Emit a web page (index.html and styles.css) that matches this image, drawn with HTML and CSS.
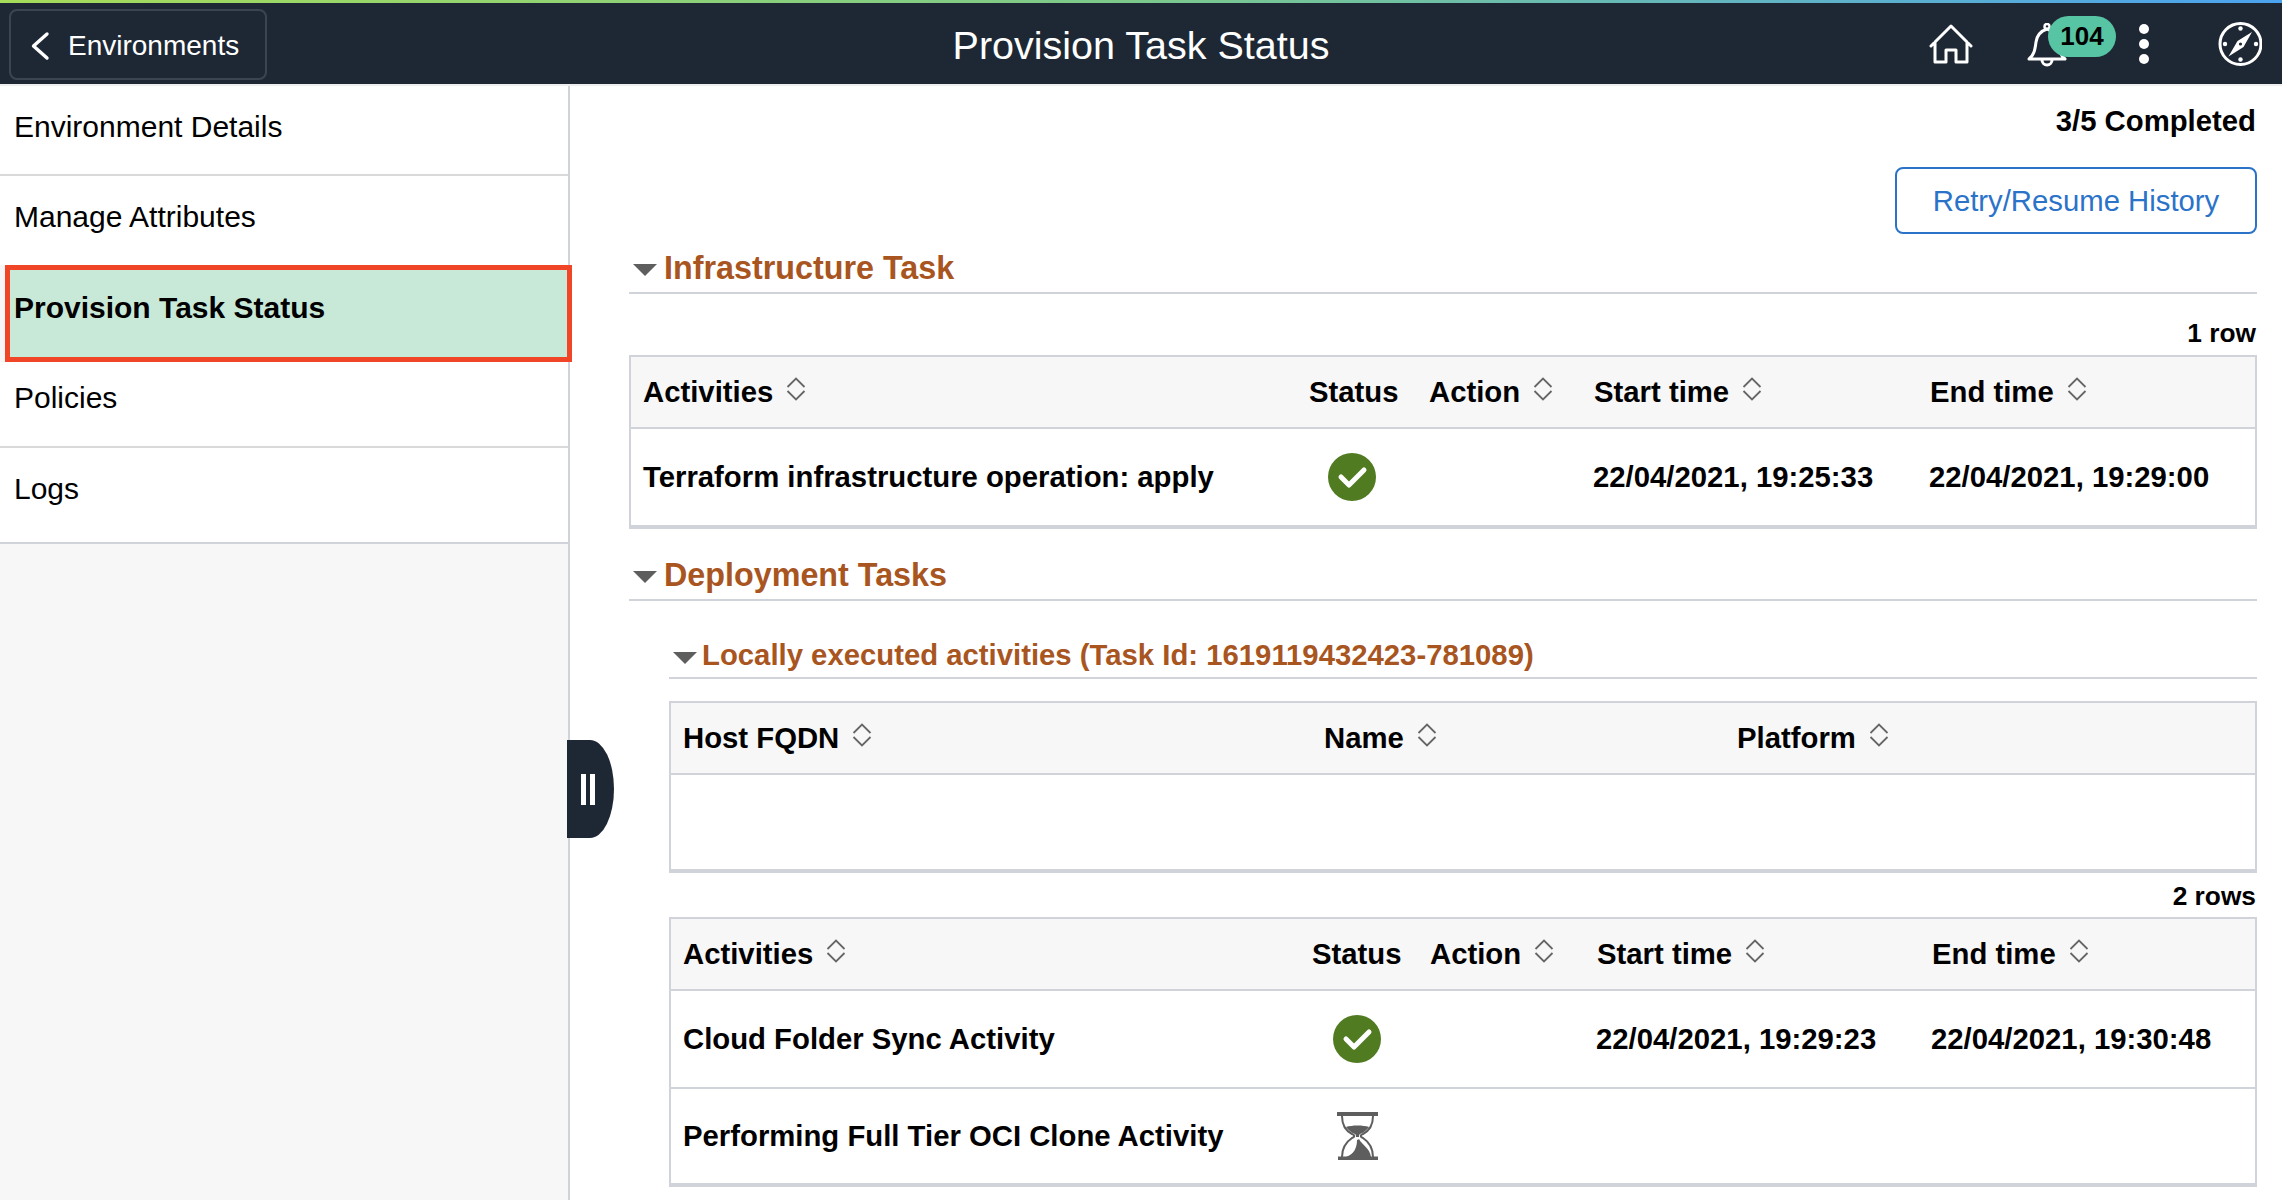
FILE: index.html
```html
<!DOCTYPE html>
<html lang="en">
<head>
<meta charset="utf-8">
<title>Provision Task Status</title>
<link rel="stylesheet" href="styles.css">
</head>
<body>
<div class="strip"></div>
<header class="topbar">
  <button class="back">
    <svg class="chev" viewBox="0 0 20 32" width="20" height="32"><path d="M17 4 3.500 16 17 28" fill="none" stroke="#fff" stroke-width="3.400" stroke-linecap="round" stroke-linejoin="round"/></svg>
    <span>Environments</span>
  </button>
  <h1 class="title">Provision Task Status</h1>
  <div class="tools">
    <svg class="home" viewBox="0 0 44 42" width="44" height="42"><path d="M2 22 22 2l20 20M6 18v20h11V26h10v12h11V18" fill="none" stroke="#fff" stroke-width="3" stroke-linecap="round" stroke-linejoin="round"/></svg>
    <div class="bell-wrap">
      <svg class="bell" viewBox="0 0 40 44" width="40" height="44"><path d="M2 36c5-4 6-9 7-17 1-7 5-11 11-13 6 2 10 6 11 13 1 8 2 13 7 17zM15 37a5 5 0 0 0 10 0" fill="none" stroke="#fff" stroke-width="3" stroke-linejoin="round"/><circle cx="20" cy="3.500" r="2.500" fill="none" stroke="#fff" stroke-width="2.500"/></svg>
      <span class="badge">104</span>
    </div>
    <div class="dots"><i></i><i></i><i></i></div>
    <svg class="compass" viewBox="0 0 44 44" width="44" height="44"><circle cx="22.500" cy="22" r="20.500" fill="none" stroke="#fff" stroke-width="3"/><path d="M34 10 25.500 25 19.500 19zM10.500 34.500 19.500 19l6 6z" fill="#fff"/><circle cx="22.500" cy="22" r="1.600" fill="#1e2835"/><circle cx="22.500" cy="6.500" r="2.200" fill="#fff"/><circle cx="22.500" cy="37.500" r="2.200" fill="#fff"/><circle cx="7" cy="22" r="2.200" fill="#fff"/><circle cx="38" cy="22" r="2.200" fill="#fff"/></svg>
  </div>
</header>
<div class="gap"></div>
<div class="shell">
  <nav class="side">
    <a class="nav one">Environment Details</a>
    <a class="nav two">Manage Attributes</a>
    <a class="nav sel">Provision Task Status</a>
    <a class="nav four">Policies</a>
    <a class="nav five">Logs</a>
  </nav>
  <div class="toggle"><i></i><i></i></div>
  <main class="main">
    <div class="done">3/5 Completed</div>
    <div class="btn-row"><button class="btn">Retry/Resume History</button></div>

    <div class="sec sec-a"><span class="tri"></span><h2>Infrastructure Task</h2></div>
    <div class="count c1">1 row</div>
    <div class="tbl">
      <div class="row head cols-a">
        <div>Activities <svg class="sort" viewBox="0 0 20 24" width="20" height="24"><path d="M1.500 10 10 1.500 18.500 10M1.500 14l8.500 8.500 8.500-8.500" fill="none" stroke="#666" stroke-width="1.800"/></svg></div>
        <div>Status</div>
        <div>Action <svg class="sort" viewBox="0 0 20 24" width="20" height="24"><path d="M1.500 10 10 1.500 18.500 10M1.500 14l8.500 8.500 8.500-8.500" fill="none" stroke="#666" stroke-width="1.800"/></svg></div>
        <div>Start time <svg class="sort" viewBox="0 0 20 24" width="20" height="24"><path d="M1.500 10 10 1.500 18.500 10M1.500 14l8.500 8.500 8.500-8.500" fill="none" stroke="#666" stroke-width="1.800"/></svg></div>
        <div>End time <svg class="sort" viewBox="0 0 20 24" width="20" height="24"><path d="M1.500 10 10 1.500 18.500 10M1.500 14l8.500 8.500 8.500-8.500" fill="none" stroke="#666" stroke-width="1.800"/></svg></div>
      </div>
      <div class="row body tall cols-a last">
        <div>Terraform infrastructure operation: apply</div>
        <div class="st st-a"><svg viewBox="0 0 48 48" width="48" height="48"><circle cx="24" cy="24" r="24" fill="#507b21"/><path d="M13 24l8 8 15-15" fill="none" stroke="#fff" stroke-width="5" stroke-linecap="round" stroke-linejoin="round"/></svg></div>
        <div></div>
        <div class="t-a">22/04/2021, 19:25:33</div>
        <div class="t-a">22/04/2021, 19:29:00</div>
      </div>
    </div>

    <div class="sec sec-b"><span class="tri"></span><h2>Deployment Tasks</h2></div>
    <div class="sub"><span class="tri small"></span><h3>Locally executed activities (Task Id: 1619119432423-781089)</h3></div>
    <div class="inner">
      <div class="tbl">
        <div class="row head cols-b">
          <div>Host FQDN <svg class="sort" viewBox="0 0 20 24" width="20" height="24"><path d="M1.500 10 10 1.500 18.500 10M1.500 14l8.500 8.500 8.500-8.500" fill="none" stroke="#666" stroke-width="1.800"/></svg></div>
          <div>Name <svg class="sort" viewBox="0 0 20 24" width="20" height="24"><path d="M1.500 10 10 1.500 18.500 10M1.500 14l8.500 8.500 8.500-8.500" fill="none" stroke="#666" stroke-width="1.800"/></svg></div>
          <div>Platform <svg class="sort" viewBox="0 0 20 24" width="20" height="24"><path d="M1.500 10 10 1.500 18.500 10M1.500 14l8.500 8.500 8.500-8.500" fill="none" stroke="#666" stroke-width="1.800"/></svg></div>
        </div>
        <div class="row body cols-b last"></div>
      </div>
      <div class="count c2">2 rows</div>
      <div class="tbl">
        <div class="row head cols-c">
          <div>Activities <svg class="sort" viewBox="0 0 20 24" width="20" height="24"><path d="M1.500 10 10 1.500 18.500 10M1.500 14l8.500 8.500 8.500-8.500" fill="none" stroke="#666" stroke-width="1.800"/></svg></div>
          <div>Status</div>
          <div>Action <svg class="sort" viewBox="0 0 20 24" width="20" height="24"><path d="M1.500 10 10 1.500 18.500 10M1.500 14l8.500 8.500 8.500-8.500" fill="none" stroke="#666" stroke-width="1.800"/></svg></div>
          <div>Start time <svg class="sort" viewBox="0 0 20 24" width="20" height="24"><path d="M1.500 10 10 1.500 18.500 10M1.500 14l8.500 8.500 8.500-8.500" fill="none" stroke="#666" stroke-width="1.800"/></svg></div>
          <div>End time <svg class="sort" viewBox="0 0 20 24" width="20" height="24"><path d="M1.500 10 10 1.500 18.500 10M1.500 14l8.500 8.500 8.500-8.500" fill="none" stroke="#666" stroke-width="1.800"/></svg></div>
        </div>
        <div class="row body cols-c">
          <div>Cloud Folder Sync Activity</div>
          <div class="st st-c"><svg viewBox="0 0 48 48" width="48" height="48"><circle cx="24" cy="24" r="24" fill="#507b21"/><path d="M13 24l8 8 15-15" fill="none" stroke="#fff" stroke-width="5" stroke-linecap="round" stroke-linejoin="round"/></svg></div>
          <div></div>
          <div class="t-c">22/04/2021, 19:29:23</div>
          <div class="t-c">22/04/2021, 19:30:48</div>
        </div>
        <div class="row body cols-c last">
          <div>Performing Full Tier OCI Clone Activity</div>
          <div class="st st-h"><svg viewBox="0 0 42 48" width="42" height="48"><path d="M0 0h41v4H0zM1 44.500h40V48H1z" fill="#5e5e5e"/><path d="M5 4c0 10 4 15 10 18 3 1 3 3 0 4C9 30 5 36 5 45M36 4c0 10-4 15-10 18-3 1-3 3 0 4 6 4 10 10 10 19" fill="none" stroke="#5e5e5e" stroke-width="2"/><path d="M9 15c6-2 17-2 23 0-2 3-6 6-9 7-1 .500-1 2-1 3h-3c0-1 0-2.500-1-3-3-1-7-4-9-7zM20 28c1 0 2-1 2-1 3 6 11 9 12 18H9c8-3 11-9 11-17z" fill="#5e5e5e"/></svg></div>
          <div></div><div></div><div></div>
        </div>
      </div>
    </div>
  </main>
</div>
</body>
</html>
```
FILE: styles.css
```css
* { box-sizing: border-box; }
html, body { margin: 0; height: 100%; }
body {
  width: 2282px; height: 1200px; overflow: hidden; background: #fff;
  font-family: "Liberation Sans", Arial, sans-serif; color: #000;
}
.strip { height: 3px; background: linear-gradient(90deg, #a6dc5a 0%, #7cc98c 50%, #4ba3f0 100%); }
.topbar {
  height: 81px; background: #1e2835; display: flex; align-items: center;
  position: relative; padding-left: 9px;
}
.gap { height: 2px; background: #eeeeee; }
.back {
  width: 258px; height: 71px; margin-top: 2px; background: transparent;
  border: 2px solid #3b4552; border-radius: 8px; color: #fff;
  display: flex; align-items: center; padding: 2px 0 0 19px; gap: 18px;
  font: 28px "Liberation Sans", Arial, sans-serif;
}
.title {
  position: absolute; left: 0; right: 0; top: 0; text-align: center; margin: 0;
  line-height: 84px; font-size: 39.500px; font-weight: 400; color: #fff; height: 81px;
}
.tools { margin-left: auto; position: relative; width: 353px; height: 81px; flex: none; }
.home { position: absolute; left: 0; top: 21px; }
.bell-wrap { position: absolute; left: 98px; top: 20px; width: 90px; height: 46px; }
.bell { position: absolute; left: 0; top: 0; }
.badge {
  position: absolute; left: 21px; top: -7px; width: 68px; height: 41px; border-radius: 21px;
  background: #57c4a3; color: #000; font-weight: 700; font-size: 26px; line-height: 41px; text-align: center;
}
.dots { position: absolute; left: 210px; top: 21px; display: flex; flex-direction: column; gap: 5px; }
.dots i { display: block; width: 10px; height: 10px; border-radius: 50%; background: #fff; }
.compass { position: absolute; left: 289px; top: 19px; }

.shell { display: flex; height: 1114px; position: relative; }
.side {
  width: 570px; flex: none; background: #f7f7f7; border-right: 2px solid #d0d3da;
  display: flex; flex-direction: column; align-items: stretch;
}
.nav { display: block; background: #fff; font-size: 30px; padding-left: 14px; border-bottom: 2px solid #d9d9d9; }
.one { height: 90px; padding-top: 24px; }
.two { height: 89px; padding-top: 24px; border-bottom: 0; }
.sel {
  height: 97px; margin: 0 -4px 0 5px; padding: 21px 0 0 4px; background: #c8e9d7;
  border: 5px solid #f04527; font-weight: 700; position: relative; z-index: 1;
}
.four { height: 86px; padding-top: 19px; }
.five { height: 96px; padding-top: 24px; border-bottom-color: #d0d3da; }
.toggle {
  position: absolute; left: 567px; top: 654px; width: 47px; height: 98px; z-index: 2;
  background: #1e2835; border-radius: 0 24px 24px 0 / 0 49px 49px 0;
  display: flex; gap: 4px; align-items: center; padding-left: 14px;
}
.toggle i { display: block; width: 5px; height: 31px; background: #fff; }

.main { flex: 1; padding: 0 25px 0 59px; min-width: 0; }
.done { text-align: right; font-weight: 700; font-size: 29.300px; line-height: 32px; padding: 19px 1px 0 0; height: 81px; }
.btn-row { display: flex; justify-content: flex-end; height: 67px; }
.btn {
  width: 362px; height: 67px; background: #fff; border: 2px solid #2b73c9; border-radius: 8px;
  color: #2b73c9; font: 29.300px "Liberation Sans", Arial, sans-serif; padding: 1px 0 0;
}
.sec { display: flex; align-items: flex-start; border-bottom: 2px solid #d0d3da; padding-left: 4px; gap: 7px; }
.sec h2 { margin: 0; font-size: 32.300px; font-weight: 700; color: #a8551f; line-height: 38px; }
.sec-a { height: 60px; padding-top: 15px; }
.sec-b { height: 72px; padding-top: 27px; }
.tri { flex: none; width: 0; height: 0; border-left: 12px solid transparent; border-right: 12px solid transparent; border-top: 12px solid #5e5e5e; margin-top: 15px; }
.sub { display: flex; align-items: flex-start; border-bottom: 2px solid #d0d3da; height: 78px; margin-left: 40px; padding: 36px 0 0 4px; gap: 5px; }
.tri.small { margin-top: 15px; }
.sub h3 { margin: 0; font-size: 29.300px; font-weight: 700; color: #a8551f; line-height: 36px; white-space: nowrap; }
.count { text-align: right; font-weight: 700; font-size: 26.300px; line-height: 30px; padding-right: 1px; }
.c1 { height: 61px; padding-top: 24px; }
.c2 { height: 44px; padding-top: 8px; }
.inner { margin-left: 40px; padding-top: 22px; }
.tbl { border: solid #d0d3da; border-width: 2px 2px 0; }
.row { display: grid; align-items: center; font-weight: 700; font-size: 29.300px; padding-left: 12px; border-bottom: 2px solid #d0d3da; }
.head { height: 72px; background: #f7f7f7; }
.body { height: 98px; }
.last { border-bottom-width: 4px; }
.tall { height: 100px; }
.head div { white-space: nowrap; }
.cols-a { grid-template-columns: 666px 120px 165px 336px 1fr; }
.cols-c { grid-template-columns: 629px 118px 167px 335px 1fr; }
.cols-b { grid-template-columns: 641px 413px 1fr; }
.sort { margin-left: 5px; vertical-align: 1px; }
.st { height: 48px; }
.st-a { padding-left: 19px; }
.st-c { padding-left: 21px; }
.st-h { padding-left: 25px; }
.t-a { margin-left: -1px; white-space: nowrap; }
.t-c { margin-left: -1px; white-space: nowrap; }
```
